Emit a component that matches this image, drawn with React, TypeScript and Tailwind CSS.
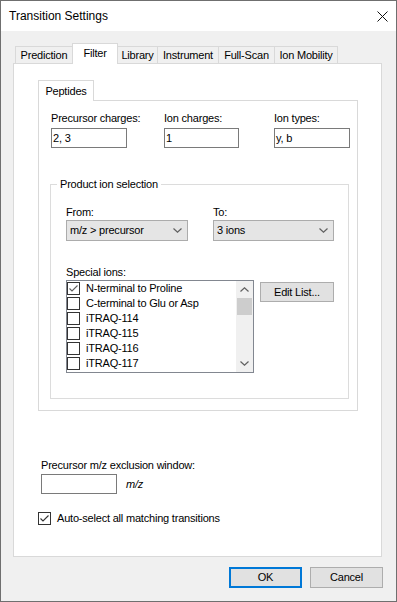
import React from 'react';

const tabs = [
  { label: 'Prediction', w: 'w-[57px]', cls: 'border-l' },
  { label: 'Filter', w: 'w-[46px]', cls: 'border-l border-r', selected: true },
  { label: 'Library', w: 'w-[40px]', cls: 'border-r' },
  { label: 'Instrument', w: 'w-[61px]', cls: 'border-r' },
  { label: 'Full-Scan', w: 'w-[56px]', cls: 'border-r' },
  { label: 'Ion Mobility', w: 'w-[63px]', cls: 'border-r' },
];

const specialIons = [
  { label: 'N-terminal to Proline', checked: true },
  { label: 'C-terminal to Glu or Asp' },
  { label: 'iTRAQ-114' },
  { label: 'iTRAQ-115' },
  { label: 'iTRAQ-116' },
  { label: 'iTRAQ-117' },
];

function CheckBox({ checked, tone = '#333333' }: { checked?: boolean; tone?: string }) {
  return (
    <span className="w-[13px] h-[13px] border border-[#333333] bg-white flex items-center justify-center shrink-0">
      {checked && (
        <svg width="11" height="11" viewBox="0 0 11 11">
          <path d="M1.5 5.5 L4 8 L9.5 2.5" fill="none" stroke={tone} strokeWidth="1.1" />
        </svg>
      )}
    </span>
  );
}

function Chevron({ up }: { up?: boolean }) {
  return (
    <svg width="9" height="5" viewBox="0 0 9 5">
      <path
        d={up ? 'M0.5 4.5 L4.5 0.8 L8.5 4.5' : 'M0.5 0.5 L4.5 4.2 L8.5 0.5'}
        fill="none"
        stroke="#606060"
        strokeWidth="1.2"
      />
    </svg>
  );
}

function TextBox({ value, w }: { value?: string; w: string }) {
  return (
    <div className={`${w} h-[20px] border border-[#7a7a7a] bg-white pl-[1px] leading-[18px]`}>{value}</div>
  );
}

function Combo({ value, w }: { value: string; w: string }) {
  return (
    <div className={`${w} h-[21px] border border-[#acacac] bg-[#e5e5e5] flex items-center justify-between pl-[3px] pr-[5px]`}>
      <span>{value}</span>
      <Chevron />
    </div>
  );
}

export default function App() {
  return (
    <div className="w-[397px] h-[602px] border border-[#6f6f6f] flex flex-col bg-[#f0f0f0] font-['Liberation_Sans',Arial,sans-serif] text-[11px] tracking-[-0.2px] text-black overflow-hidden">
      {/* title bar */}
      <div className="h-[30px] shrink-0 bg-white flex items-center justify-between pl-[8px] pr-[8px]">
        <span className="text-[12px] tracking-normal">Transition Settings</span>
        <svg width="11" height="11" viewBox="0 0 11 11">
          <path d="M0.5 0.5 L10.5 10.5 M10.5 0.5 L0.5 10.5" stroke="#111" strokeWidth="1" />
        </svg>
      </div>

      <div className="flex-1 flex flex-col pl-[12px] pr-[14px] pt-[12px]">
        {/* tab strip */}
        <div className="flex items-end h-[20px] pl-[2px] relative z-10">
          {tabs.map((t) =>
            t.selected ? (
              <div
                key={t.label}
                className={`${t.w} h-[21px] -mb-px bg-white border-t border-[#d9d9d9] ${t.cls} flex items-center justify-center pb-[2px]`}
              >
                {t.label}
              </div>
            ) : (
              <div
                key={t.label}
                className={`${t.w} h-[17px] border-t border-[#d9d9d9] ${t.cls} flex items-center justify-center pt-px`}
              >
                {t.label}
              </div>
            )
          )}
        </div>

        {/* tab page */}
        <div className="h-[494px] bg-white border border-[#d9d9d9] pt-[16px] pl-[24px]">
          <div className="flex items-end h-[20px] relative z-10">
            <div className="w-[56px] h-[21px] -mb-px bg-white border border-b-0 border-[#d9d9d9] flex items-center justify-center">
              Peptides
            </div>
          </div>
          <div className="w-[320px] h-[311px] border border-[#d9d9d9] pt-[11px] pl-[12px]">
            <div className="flex">
              <div className="w-[113px]">
                <div className="leading-[13px] mb-[3px]">Precursor charges:</div>
                <TextBox value="2, 3" w="w-[76px]" />
              </div>
              <div className="w-[110px]">
                <div className="leading-[13px] mb-[3px]">Ion charges:</div>
                <TextBox value="1" w="w-[75px]" />
              </div>
              <div>
                <div className="leading-[13px] mb-[3px]">Ion types:</div>
                <TextBox value="y, b" w="w-[76px]" />
              </div>
            </div>

            {/* product ion selection group */}
            <div className="relative -ml-px mt-[36px] w-[299px] h-[215px] border border-[#dcdcdc] pt-[21px] pl-[15px]">
              <span className="absolute left-[6px] -top-[7px] px-[3px] bg-white leading-[13px]">Product ion selection</span>
              <div className="flex">
                <div className="w-[147px]">
                  <div className="leading-[13px] mb-[1px]">From:</div>
                  <Combo value="m/z > precursor" w="w-[122px]" />
                </div>
                <div>
                  <div className="leading-[13px] mb-[1px]">To:</div>
                  <Combo value="3 ions" w="w-[121px]" />
                </div>
              </div>

              <div className="leading-[13px] mt-[25px] mb-[1px]">Special ions:</div>
              <div className="flex items-start">
                <div className="w-[188px] h-[93px] border border-[#828790] bg-white flex">
                  <div className="flex-1 flex flex-col">
                    {specialIons.map((s) => (
                      <div key={s.label} className="h-[15px] flex items-center">
                        <CheckBox checked={s.checked} tone="#5f5f5f" />
                        <span className="ml-[6px] leading-[15px]">{s.label}</span>
                      </div>
                    ))}
                  </div>
                  <div className="w-[17px] bg-[#f0f0f0] flex flex-col">
                    <div className="h-[17px] flex items-center justify-center">
                      <Chevron up />
                    </div>
                    <div className="h-[17px] mx-px bg-[#cdcdcd]" />
                    <div className="flex-1" />
                    <div className="h-[17px] flex items-center justify-center">
                      <Chevron />
                    </div>
                  </div>
                </div>
                <div className="ml-[6px] mt-[2px] w-[74px] h-[20px] border border-[#adadad] bg-[#e1e1e1] flex items-center justify-center">
                  Edit List...
                </div>
              </div>
            </div>
          </div>

          <div className="ml-[3px] mt-[48px] leading-[13px] mb-[2px]">Precursor m/z exclusion window:</div>
          <div className="ml-[3px] flex items-center">
            <TextBox w="w-[76px]" />
            <span className="ml-[9px] italic">m/z</span>
          </div>
          <div className="mt-[18px] flex items-center">
            <CheckBox checked />
            <span className="ml-[6px] leading-[13px]">Auto-select all matching transitions</span>
          </div>
        </div>

        {/* buttons */}
        <div className="flex justify-end gap-[8px] mt-[10px] -mr-px">
          <div className="w-[73px] h-[21px] border-2 border-[#0078d7] bg-[#e1e1e1] flex items-center justify-center">OK</div>
          <div className="w-[73px] h-[21px] border border-[#adadad] bg-[#e1e1e1] flex items-center justify-center">Cancel</div>
        </div>
      </div>
    </div>
  );
}
